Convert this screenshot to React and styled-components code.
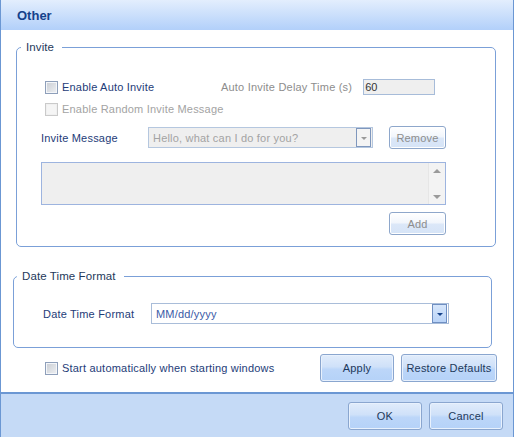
import React from "react";
import styled, { createGlobalStyle } from "styled-components";

const GlobalStyle = createGlobalStyle`
  body {
    margin: 0;
    font-family: "Liberation Sans", Arial, sans-serif;
    font-size: 11px;
    background: #ffffff;
  }
`;

const Window = styled.div`
  width: 514px;
  height: 437px;
  box-sizing: border-box;
  display: flex;
  flex-direction: column;
  border-left: 1px solid #6b97d3;
  border-right: 1px solid #6b97d3;
`;

const TitleBar = styled.div`
  height: 30px;
  flex: none;
  display: flex;
  align-items: center;
  padding-left: 16px;
  background: linear-gradient(#e3eefd, #b2d0fa);
  color: #15428b;
  font-size: 13px;
  font-weight: bold;
`;

const Content = styled.div`
  height: 364px;
  box-sizing: border-box;
  background: #ffffff;
  border-bottom: 2px solid #6b97d3;
  display: flex;
  flex-direction: column;
  padding-top: 11px;
`;

const Group = styled.fieldset`
  margin: ${(p) => p.$margin};
  width: ${(p) => p.$width}px;
  box-sizing: border-box;
  border: 1px solid #7ba0d8;
  border-radius: 5px;
  padding: ${(p) => p.$padding};
  min-width: 0;
`;

const Legend = styled.legend`
  margin-left: ${(p) => p.$offset}px;
  padding: 0 8px 0 5px;
  line-height: 13px;
  color: #1e395b;
  font-size: 11.5px;
  letter-spacing: 0.1px;
`;

const GroupBody = styled.div`
  padding-left: ${(p) => p.$indent}px;
`;

const Column = styled.div`
  display: flex;
  flex-direction: column;
  width: 405px;
`;

const Row = styled.div`
  display: flex;
  align-items: center;
  height: ${(p) => p.$height}px;
  margin-top: ${(p) => p.$top || 0}px;
  padding-left: ${(p) => p.$indent || 0}px;
`;

const CheckWrap = styled.label`
  display: flex;
  align-items: center;
  gap: 4px;
  width: ${(p) => (p.$width ? `${p.$width}px` : "auto")};
  color: ${(p) => (p.$disabled ? "#a3a3a3" : "#1e3c78")};
  letter-spacing: 0.2px;
`;

const Box = styled.span`
  width: 11px;
  height: 11px;
  border: 1px solid ${(p) => (p.$disabled ? "#cacaca" : "#8e9fba")};
  background: ${(p) =>
    p.$disabled
      ? "#f5f5f5"
      : "linear-gradient(135deg, #c9cdd3, #eef0f3)"};
  box-shadow: inset 0 0 0 1px ${(p) => (p.$disabled ? "#f0f0f0" : "#f4f6f9")};
  flex: none;
`;

const Label = styled.span`
  color: ${(p) => (p.$muted ? "#8d8d8d" : "#1e3c78")};
  width: ${(p) => (p.$width ? `${p.$width}px` : "auto")};
  letter-spacing: 0.2px;
  flex: none;
`;

const TextInput = styled.div`
  margin-left: 11px;
  width: 72px;
  height: 16px;
  box-sizing: border-box;
  border: 1px solid #a7bcd9;
  background: #efefef;
  color: #333333;
  padding-left: 1px;
  line-height: 14px;
`;

const Combo = styled.div`
  width: ${(p) => p.$width}px;
  height: 21px;
  box-sizing: border-box;
  border: 1px solid ${(p) => (p.$disabled ? "#b5c7df" : "#a9bdd9")};
  background: ${(p) => (p.$disabled ? "#efefef" : "#ffffff")};
  display: flex;
  align-items: center;
  padding: 0 1px 0 4px;
  color: ${(p) => (p.$disabled ? "#a3a3a3" : "#3a5aa6")};
  letter-spacing: 0.2px;
`;

const ComboText = styled.span`
  flex: 1;
`;

const DropButton = styled.span`
  width: 13px;
  height: 17px;
  border: 1px solid ${(p) => (p.$disabled ? "#7f97bd" : "#6f8fc2")};
  background: ${(p) => (p.$disabled ? "#f4f4f4" : "linear-gradient(#d6e6fb, #b9d3f7)")};
  display: flex;
  align-items: center;
  justify-content: center;
`;

const Arrow = styled.span`
  width: 0;
  height: 0;
  border-left: 3px solid transparent;
  border-right: 3px solid transparent;
  border-top: 3px solid ${(p) => p.$color};
  margin-top: 1px;
`;

const UpArrow = styled.span`
  width: 0;
  height: 0;
  border-left: 4px solid transparent;
  border-right: 4px solid transparent;
  border-bottom: 4px solid #9a9a9a;
`;

const DownArrow = styled(UpArrow)`
  border-bottom: none;
  border-top: 4px solid #9a9a9a;
`;

const Button = styled.div`
  width: ${(p) => p.$width}px;
  height: ${(p) => p.$height}px;
  margin-left: ${(p) => p.$gap || 0}px;
  box-sizing: border-box;
  border: 1px solid ${(p) => (p.$disabled ? "#8ea7cb" : "#8aa6cf")};
  border-radius: 3px;
  background: ${(p) =>
    p.$disabled
      ? "linear-gradient(#ffffff 0%, #f2f6fc 45%, #dbe7f8 55%, #d6e4f7 100%)"
      : "linear-gradient(#e1ecfb 0%, #cfe1f9 45%, #bcd6f9 55%, #b5d2f8 100%)"};
  box-shadow: inset 0 0 0 1px ${(p) => (p.$disabled ? "#ffffff" : "#e8f1fd")};
  display: flex;
  align-items: center;
  justify-content: center;
  color: ${(p) => (p.$disabled ? "#8d8d8d" : "#1e395b")};
  font-size: 11px;
  letter-spacing: 0.2px;
  flex: none;
`;

const TextArea = styled.div`
  margin-top: 13px;
  width: 405px;
  height: 43px;
  box-sizing: border-box;
  border: 1px solid #9db4df;
  background: #efefef;
  display: flex;
  justify-content: flex-end;
`;

const ScrollBar = styled.div`
  width: 16px;
  background: #f3f3f3;
  border-left: 1px solid #e6e6e6;
  display: flex;
  flex-direction: column;
  align-items: center;
  justify-content: space-between;
  padding: 6px 0 5px;
`;

const AddRow = styled.div`
  display: flex;
  justify-content: flex-end;
  margin-top: 7px;
`;

const BottomRow = styled.div`
  display: flex;
  align-items: center;
  margin-top: 6px;
  padding: 0 16px 0 44px;
  height: 28px;
`;

const Actions = styled.div`
  margin-left: auto;
  display: flex;
  gap: 7px;
`;

const Footer = styled.div`
  flex: 1;
  background: #c5daf6;
  display: flex;
  align-items: center;
  justify-content: flex-end;
  gap: 7px;
  padding-right: 10px;
  padding-top: 1px;
`;

const CheckBox = ({ label, disabled, width }) => (
  <CheckWrap $disabled={disabled} $width={width}>
    <Box $disabled={disabled} />
    {label}
  </CheckWrap>
);

const App = () => {
  return (
    <>
      <GlobalStyle />
      <Window>
        <TitleBar>Other</TitleBar>
        <Content>
          <Group $margin="0 0 0 15px" $width={480} $padding="25px 0 11px 0">
            <Legend $offset={4}>Invite</Legend>
            <GroupBody $indent={24}>
              <Row $height={16} $indent={4}>
                <CheckBox label="Enable Auto Invite" width={176} />
                <Label $muted>Auto Invite Delay Time (s)</Label>
                <TextInput>60</TextInput>
              </Row>
              <Row $height={16} $top={6} $indent={4}>
                <CheckBox label="Enable Random Invite Message" disabled />
              </Row>
              <Row $height={23} $top={9}>
                <Label $width={107}>Invite Message</Label>
                <Combo $width={225} $disabled>
                  <ComboText>Hello, what can I do for you?</ComboText>
                  <DropButton $disabled>
                    <Arrow $color="#9a9a9a" />
                  </DropButton>
                </Combo>
                <Button $disabled $width={57} $height={23} $gap={16}>
                  Remove
                </Button>
              </Row>
              <Column>
                <TextArea>
                  <ScrollBar>
                    <UpArrow />
                    <DownArrow />
                  </ScrollBar>
                </TextArea>
                <AddRow>
                  <Button $disabled $width={57} $height={23}>
                    Add
                  </Button>
                </AddRow>
              </Column>
            </GroupBody>
          </Group>
          <Group $margin="23px 0 0 12px" $width={479} $padding="20px 0 23px 0">
            <Legend $offset={3}>Date Time Format</Legend>
            <GroupBody $indent={29}>
              <Row $height={21}>
                <Label $width={108}>Date Time Format</Label>
                <Combo $width={298}>
                  <ComboText>MM/dd/yyyy</ComboText>
                  <DropButton>
                    <Arrow $color="#15428b" />
                  </DropButton>
                </Combo>
              </Row>
            </GroupBody>
          </Group>
          <BottomRow>
            <CheckBox label="Start automatically when starting windows" />
            <Actions>
              <Button $width={74} $height={28}>Apply</Button>
              <Button $width={96} $height={28}>Restore Defaults</Button>
            </Actions>
          </BottomRow>
        </Content>
        <Footer>
          <Button $width={74} $height={28}>OK</Button>
          <Button $width={74} $height={28}>Cancel</Button>
        </Footer>
      </Window>
    </>
  );
};

export default App;
